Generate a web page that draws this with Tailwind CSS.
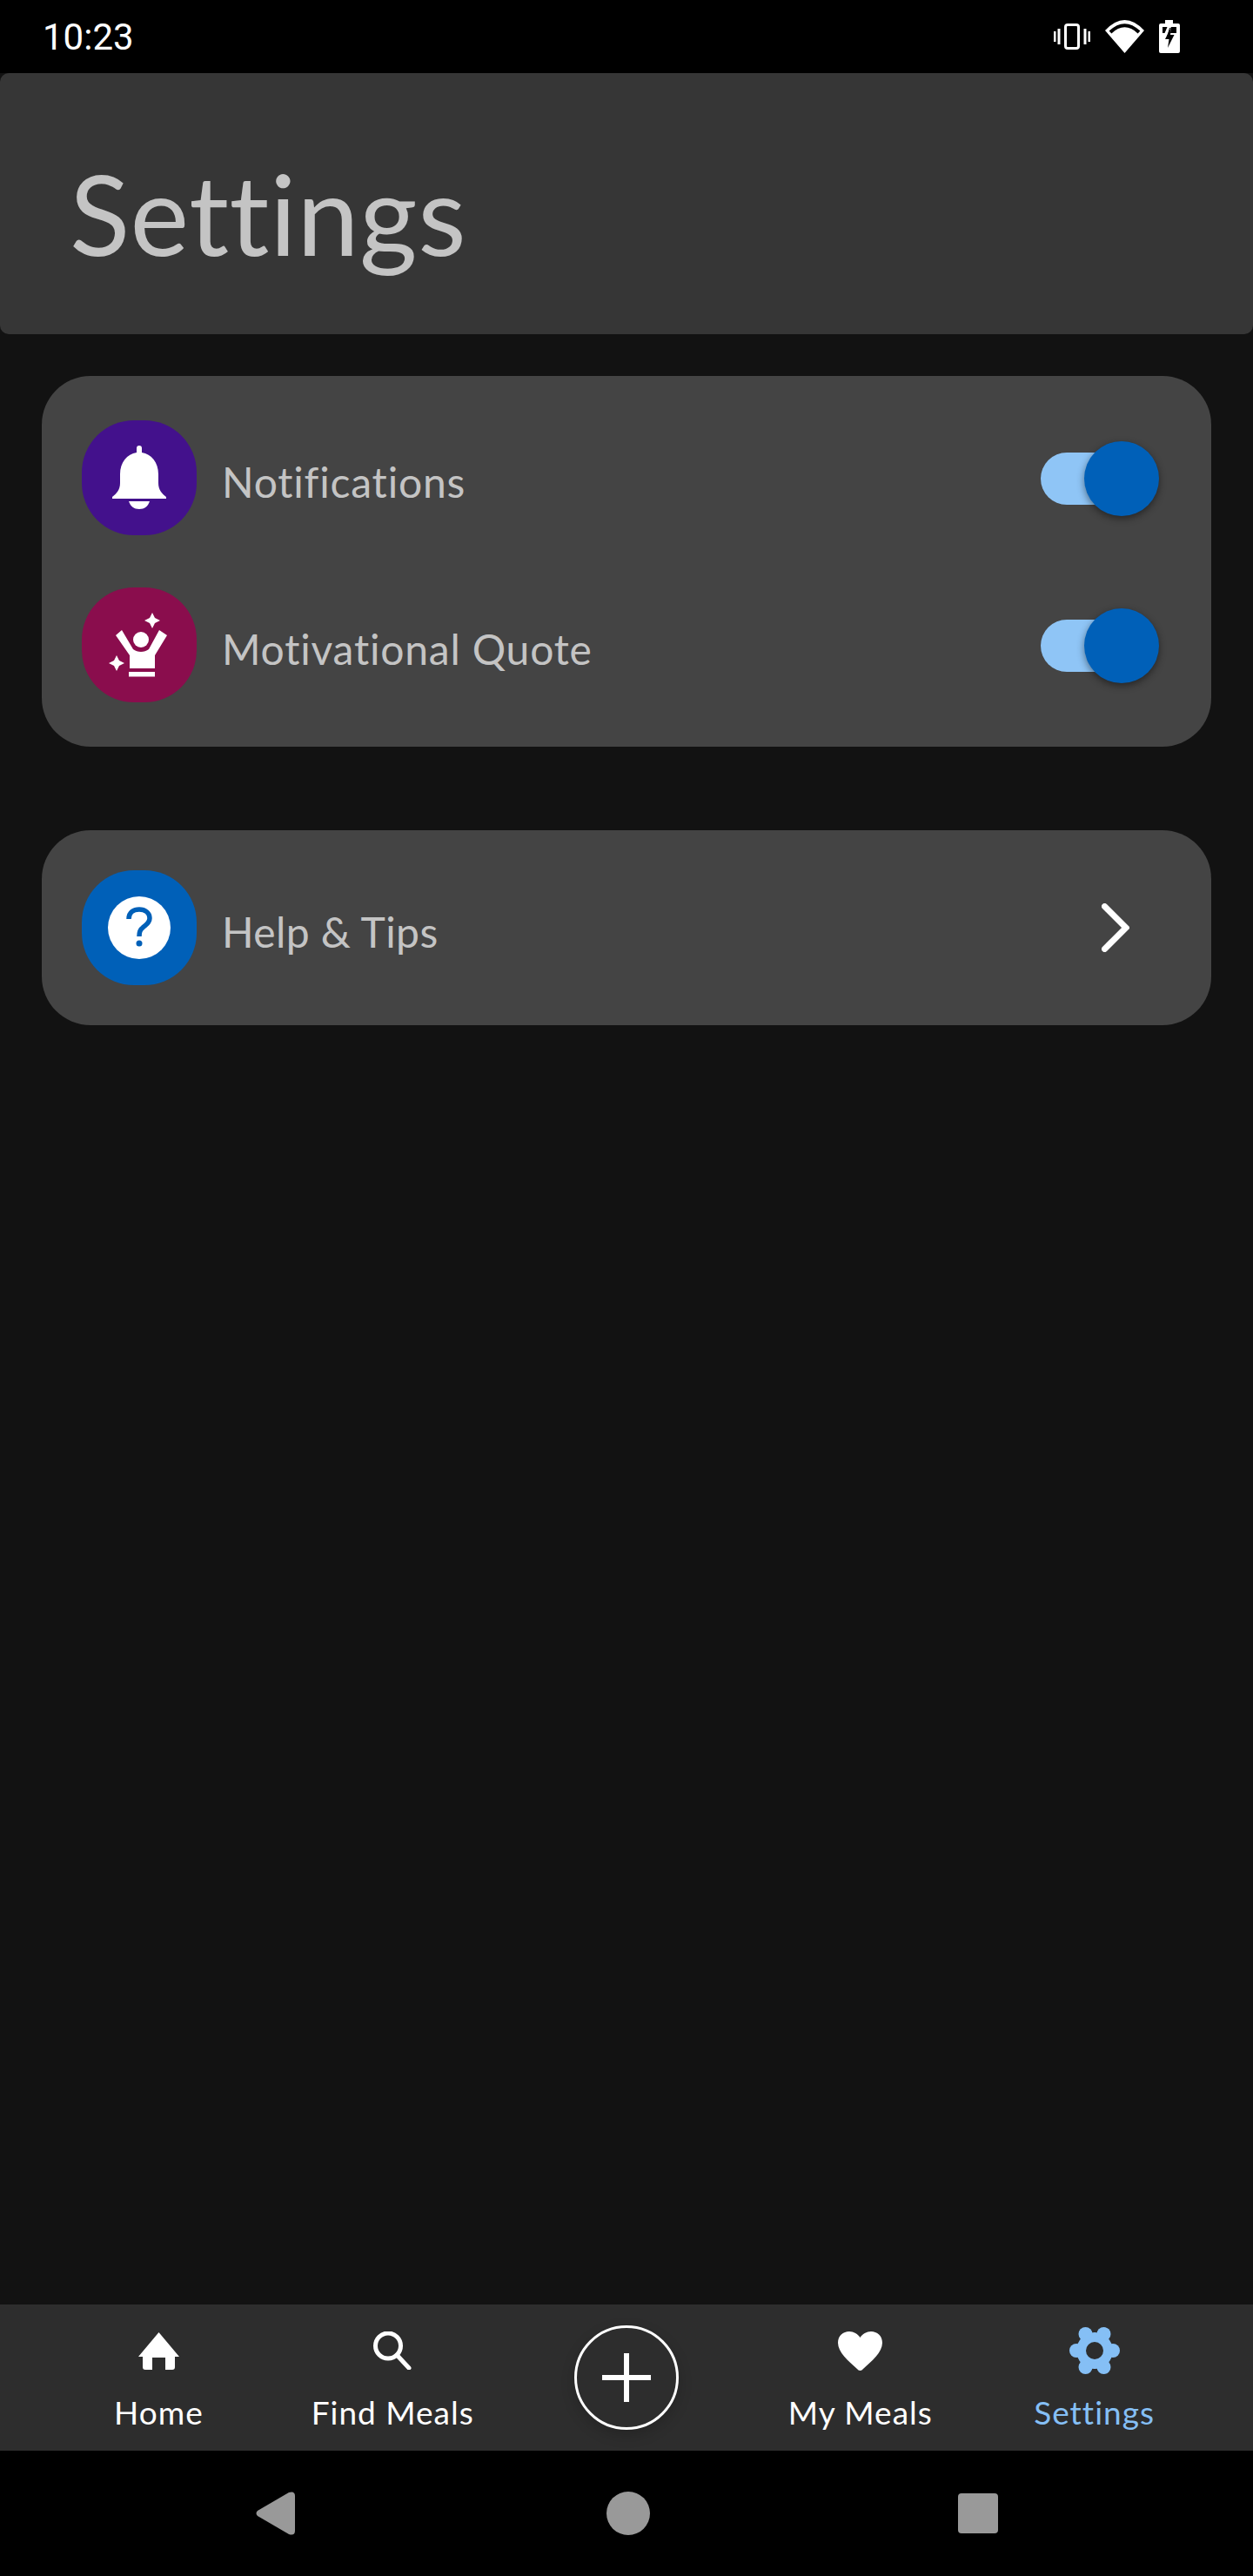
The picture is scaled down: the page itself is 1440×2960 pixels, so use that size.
<!DOCTYPE html>
<html>
<head>
<meta charset="utf-8">
<script src="https://cdn.jsdelivr.net/npm/@tailwindcss/browser@4"></script>
</head>
<body class="bg-[#121212] font-['Lato',sans-serif] [font-variant-ligatures:none]">
<div class="flex flex-col w-[1440px] h-[2960px] bg-[#121212] overflow-hidden">
  <!-- status bar -->
  <div class="h-[84px] shrink-0 bg-black flex items-center justify-between pl-[49px] pr-[84px]">
    <span class="font-['Roboto',sans-serif] text-[42px] leading-none text-white pt-[2px]">10:23</span>
    <div class="flex items-center gap-[17px] h-[84px]">
      <svg width="42" height="30" viewBox="0 0 42 30"><rect x="13.500" y="1.500" width="15" height="27" rx="2.500" fill="none" stroke="#fff" stroke-width="3"/><rect x="0" y="9" width="2.500" height="12" fill="#fff"/><rect x="4.500" y="6" width="3" height="18" fill="#fff"/><rect x="34.500" y="6" width="3" height="18" fill="#fff"/><rect x="39.500" y="9" width="2.500" height="12" fill="#fff"/></svg>
      <svg width="45" height="38" viewBox="0 0 45 38"><path d="M0 12 Q22.500 -12 45 12 L22.500 38 Z" fill="#fff"/><path d="M6 14 Q22.500 -1.500 39 14" fill="none" stroke="#000" stroke-width="4"/></svg>
      <svg width="24" height="38" viewBox="0 0 24 38"><path d="M7 0 H16 V4 H22 a2 2 0 0 1 2 2 V36 a2 2 0 0 1 -2 2 H2 a2 2 0 0 1 -2 -2 V6 a2 2 0 0 1 2 -2 H7 Z" fill="#fff"/><path d="M4 8 H9.500 L6.500 15 H4 Z M14 8 H20 V15 H13 Z" fill="#000"/><path d="M14 8 L7 22 H11.500 L10 32 L17.500 17 H13 Z" fill="#000"/><path d="M12.500 9 L9 21" stroke="#000" stroke-width="1"/></svg>
    </div>
  </div>

  <!-- header -->
  <div class="h-[300px] shrink-0 bg-[#363636] rounded-[10px] flex items-center pl-[80px]">
    <h1 class="text-[128px] leading-none font-normal text-[#c4c4c4] tracking-[0.5px] pt-[21px]">Settings</h1>
  </div>

  <!-- content -->
  <main class="flex-1 px-12 pt-12 flex flex-col gap-[96px]">
    <section class="bg-[#444444] rounded-[56px] pt-[51px] pb-[51px] pl-[46px] pr-[76px] flex flex-col gap-[60px]">
      <div class="flex items-center h-[132px]">
        <div class="w-[132px] h-[132px] rounded-[60px] bg-[#43118c] shrink-0">
          <svg width="132" height="132" viewBox="0 0 132 132"><path d="M63 37 V32 a3 3 0 0 1 6 0 V37 C80 39 88 48 88 62 V72 C88 80 92 84 97 88 V90 H35 V88 C40 84 44 80 44 72 V62 C44 48 52 39 63 37 Z" fill="#fff"/><path d="M54 93 H78 C76 99 72 102 66 102 C60 102 56 99 54 93 Z" fill="#fff"/></svg>
        </div>
        <span class="ml-[29px] text-[48px] leading-none text-[#c4c4c4] tracking-[0.8px] pt-[9px]">Notifications</span>
        <div class="ml-auto relative w-[120px] h-[60px] rounded-full bg-[#8fc5f6] mt-[2px]">
          <div class="absolute right-[-16px] top-[-13px] w-[86px] h-[86px] rounded-full bg-[#0060b8] shadow-[0_3px_8px_rgba(0,0,0,0.45)]"></div>
        </div>
      </div>
      <div class="flex items-center h-[132px]">
        <div class="w-[132px] h-[132px] rounded-[60px] bg-[#8a0d4d] shrink-0">
          <svg width="132" height="132" viewBox="0 0 132 132" fill="#fff"><path d="M81 29 L84 35 L90 38 L84 41 L81 47 L78 41 L72 38 L78 35 Z"/><path d="M40 78 L43 84 L49 87 L43 90 L40 96 L37 90 L31 87 L37 84 Z"/><circle cx="68" cy="60" r="9"/><path d="M39 55 L46 49 L59 71 C64 75 72 75 77 71 L89 49 L98 55 L84 78 V93 H55 V78 Z"/><rect x="54" y="97" width="30" height="5.500"/></svg>
        </div>
        <span class="ml-[29px] text-[48px] leading-none text-[#c4c4c4] tracking-[0.8px] pt-[9px]">Motivational Quote</span>
        <div class="ml-auto relative w-[120px] h-[60px] rounded-full bg-[#8fc5f6] mt-[2px]">
          <div class="absolute right-[-16px] top-[-13px] w-[86px] h-[86px] rounded-full bg-[#0060b8] shadow-[0_3px_8px_rgba(0,0,0,0.45)]"></div>
        </div>
      </div>
    </section>

    <section class="bg-[#444444] rounded-[56px] h-[224px] pl-[46px] pr-[94px] flex items-center">
      <div class="w-[132px] h-[132px] rounded-[60px] bg-[#0060b8] shrink-0">
        <svg width="132" height="132" viewBox="0 0 132 132"><circle cx="66" cy="66" r="36" fill="#fff"/><path d="M54 56 C54 48 60 45 66 45 C73 45 78 49 78 55 C78 61 73 63 70 66 C67 68 66 71 66 76" fill="none" stroke="#0060b8" stroke-width="5.500"/><circle cx="66" cy="84" r="3.500" fill="#0060b8"/></svg>
      </div>
      <span class="ml-[29px] text-[48px] leading-none text-[#c4c4c4] tracking-[0.4px] pt-[9px]">Help &amp; Tips</span>
      <svg class="ml-auto" width="32" height="56" viewBox="0 0 32 56"><path d="M3.500 3.500 L28 28 L3.500 52.500" fill="none" stroke="#fff" stroke-width="7" stroke-linecap="round" stroke-linejoin="miter"/></svg>
    </section>
  </main>

  <!-- bottom nav -->
  <nav class="h-[168px] shrink-0 bg-[#2d2d2d] px-12 grid grid-cols-5">
    <div class="flex flex-col items-center pt-[25px]">
      <div class="h-[56px] flex items-center justify-center">
        <svg width="47" height="43" viewBox="0 0 47 43" fill="#fff"><path d="M23.500 0 L47 28 H42 V40 a3 3 0 0 1 -3 3 H31 V29 H16 V43 H8 a3 3 0 0 1 -3 -3 V28 H0 Z"/></svg>
      </div>
      <span class="mt-[21px] text-[37px] leading-[44px] tracking-[1px] text-white">Home</span>
    </div>
    <div class="flex flex-col items-center pt-[25px]">
      <div class="h-[56px] flex items-center justify-center">
        <svg width="44" height="44" viewBox="0 0 44 44"><circle cx="17" cy="16.500" r="14.500" fill="none" stroke="#fff" stroke-width="5"/><path d="M27 27 L41 42" stroke="#fff" stroke-width="5" stroke-linecap="round"/></svg>
      </div>
      <span class="mt-[21px] text-[37px] leading-[44px] tracking-[1px] text-white">Find Meals</span>
    </div>
    <div class="flex justify-center items-start pt-[24px]">
      <div class="w-[120px] h-[120px] rounded-full border-[3px] border-white flex items-center justify-center shadow-[0_6px_16px_rgba(0,0,0,0.18)] bg-[#2d2d2d]">
        <svg width="56" height="56" viewBox="0 0 56 56"><path d="M28 0 V56 M0 28 H56" stroke="#fff" stroke-width="6"/></svg>
      </div>
    </div>
    <div class="flex flex-col items-center pt-[25px]">
      <div class="h-[56px] flex items-center justify-center">
        <svg width="51" height="45" viewBox="0 0 51 45" fill="#fff"><path d="M25.500 45 C24 45 23 44 22 43 C12 34 0 24 0 13 C0 5 6 0 13 0 C18 0 23 3 25.500 7 C28 3 33 0 38 0 C45 0 51 5 51 13 C51 24 39 34 29 43 C28 44 27 45 25.500 45 Z"/></svg>
      </div>
      <span class="mt-[21px] text-[37px] leading-[44px] tracking-[1px] text-white">My Meals</span>
    </div>
    <div class="flex flex-col items-center pt-[25px]">
      <div class="h-[56px] flex items-center justify-center">
        <svg width="58" height="56" viewBox="0 0 58 56"><g fill="#85bff5"><circle cx="29" cy="28" r="21"/><circle cx="50" cy="28" r="8"/><circle cx="8" cy="28" r="8"/><circle cx="18.500" cy="9" r="8"/><circle cx="39.500" cy="9" r="8"/><circle cx="18.500" cy="47" r="8"/><circle cx="39.500" cy="47" r="8"/></g><circle cx="29" cy="28" r="10" fill="#2d2d2d"/></svg>
      </div>
      <span class="mt-[21px] text-[37px] leading-[44px] tracking-[1px] text-[#85bff5]">Settings</span>
    </div>
  </nav>

  <!-- system nav -->
  <div class="h-[144px] shrink-0 bg-black flex items-center justify-center">
    <svg class="mr-[357px]" width="46" height="50" viewBox="0 0 46 50"><path d="M2 22 L38 1 Q45 -1 45 5 V45 Q45 51 38 49 L2 28 Q-1 25 2 22 Z" fill="#999"/></svg>
    <div class="w-[50px] h-[50px] rounded-full bg-[#999999]"></div>
    <div class="ml-[354px] w-[46px] h-[46px] rounded-[4px] bg-[#999999]"></div>
  </div>
</div>
</body>
</html>
